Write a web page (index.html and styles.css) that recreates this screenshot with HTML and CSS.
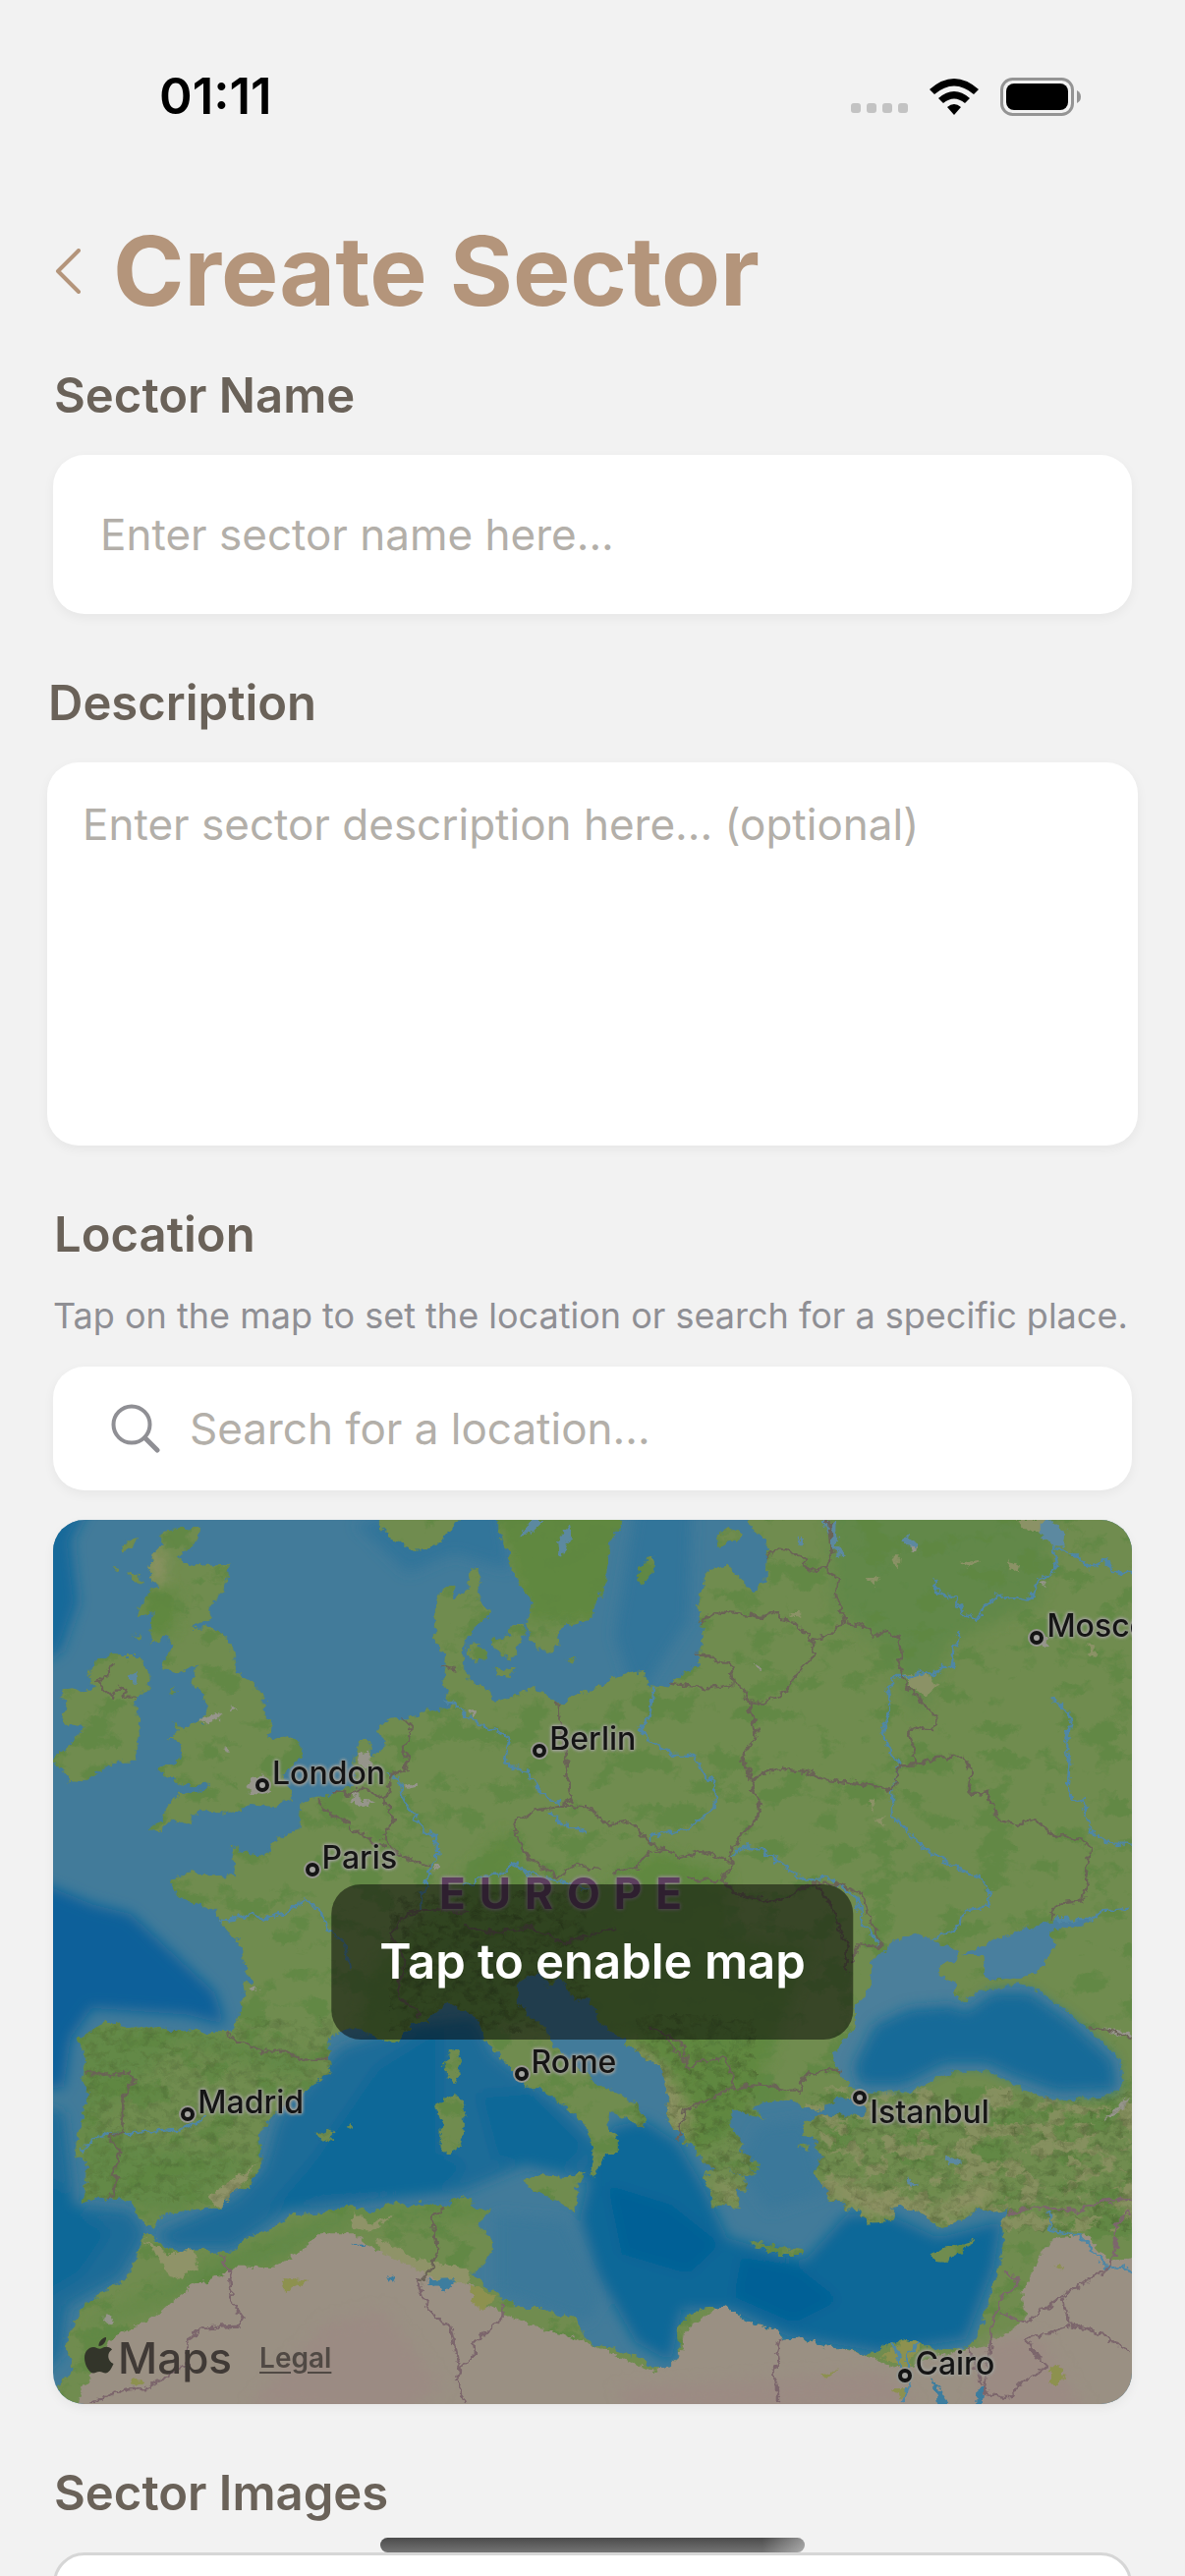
FILE: index.html
```html
<!DOCTYPE html>
<html lang="en">
<head>
<meta charset="utf-8">
<meta name="viewport" content="width=device-width, initial-scale=1">
<title>Create Sector</title>
<link rel="stylesheet" href="styles.css">
</head>
<body>
<div class="screen">
  <div class="status">
    <span class="time">01:11</span>
    <div class="status-icons">
      <svg class="dots" viewBox="0 0 58 10" aria-hidden="true"><g fill="#c3c3c3"><rect width="10" height="10" rx="3"/><rect x="16" width="10" height="10" rx="3"/><rect x="32" width="10" height="10" rx="3"/><rect x="48" width="10" height="10" rx="3"/></g></svg>
      <svg class="wifi" viewBox="0 0 50 37" aria-hidden="true"><path d="M0 11Q25-11 50 11L45 16Q25-1 5 16ZM9 20Q25 6 41 20L36 25Q25 16 14 25ZM18 29Q25 23 32 29L25 37Z"/></svg>
      <svg class="battery" viewBox="0 0 82 39" aria-hidden="true"><rect x="1.5" y="1.5" width="72" height="36" rx="11" fill="none" stroke="#949494" stroke-width="3"/><rect x="6" y="6" width="63" height="27" rx="8"/><path d="M78 13Q82 15 82 19.500Q82 24 78 26Z" fill="#949494"/></svg>
    </div>
  </div>

  <header class="title-row">
    <button class="back" type="button" aria-label="Back"><svg viewBox="0 0 26 46" aria-hidden="true"><path d="M24 2L3 23L24 44" fill="none" stroke="#b4957b" stroke-width="4" stroke-linecap="round" stroke-linejoin="round"/></svg></button>
    <h1>Create Sector</h1>
  </header>

  <main class="form">
    <div class="field">
      <label for="name">Sector Name</label>
      <input class="box name" id="name" type="text" placeholder="Enter sector name here...">
    </div>
    <div class="field wide">
      <label for="description">Description</label>
      <textarea class="box description" id="description" placeholder="Enter sector description here... (optional)"></textarea>
    </div>
    <section class="location">
      <label for="search">Location</label>
      <p class="hint">Tap on the map to set the location or search for a specific place.</p>
      <div class="box search">
        <svg viewBox="0 0 50 50" aria-hidden="true"><g fill="none" stroke="#8f8f94" stroke-width="4" stroke-linecap="round"><circle cx="21" cy="21" r="18.500"/><path d="M34.500 34.500L47 47" stroke-width="5"/></g></svg>
        <input id="search" type="text" placeholder="Search for a location...">
      </div>
      <div class="map">
        <svg class="terrain" viewBox="39 48 3074 2700" preserveAspectRatio="none" aria-hidden="true">
          <defs>
            <filter id="soft" filterUnits="userSpaceOnUse" x="-200" y="-200" width="3600" height="3200"><feGaussianBlur stdDeviation="20"/></filter>
            <filter id="jag" filterUnits="userSpaceOnUse" x="0" y="0" width="3160" height="2800"><feTurbulence type="fractalNoise" baseFrequency=".045" numOctaves="3" seed="4"/><feDisplacementMap in="SourceGraphic" scale="30" xChannelSelector="R" yChannelSelector="G"/></filter>
            <filter id="woods" filterUnits="userSpaceOnUse" x="0" y="0" width="3160" height="2800" color-interpolation-filters="sRGB"><feTurbulence type="fractalNoise" baseFrequency=".009 .012" numOctaves="5" seed="11"/><feColorMatrix values="0 0 0 0 .37  0 0 0 0 .53  0 0 0 0 .26  10 0 0 0 -5.600"/></filter>
            <filter id="dry" filterUnits="userSpaceOnUse" x="0" y="0" width="3160" height="2800" color-interpolation-filters="sRGB"><feTurbulence type="fractalNoise" baseFrequency=".013 .018" numOctaves="4" seed="23"/><feColorMatrix values="0 0 0 0 .55  0 0 0 0 .57  0 0 0 0 .39  12 0 0 0 -6.300"/></filter>
            <filter id="relief" filterUnits="userSpaceOnUse" x="0" y="0" width="3160" height="2800" color-interpolation-filters="sRGB"><feTurbulence type="fractalNoise" baseFrequency=".03 .04" numOctaves="4" seed="7"/><feColorMatrix values="0 0 0 0 .24  0 0 0 0 .3  0 0 0 0 .15  2.500 0 0 0 -1.150"/></filter>
            <clipPath id="land">
              <path d="M350 80L465 70L440 125L400 155L410 180L440 190L535 185L538 215L520 270L480 320L490 350L430 378L490 375L525 400L550 435L565 515L615 550L640 590V640L662 680L655 720L700 708L745 730V775L690 830L722 880L715 900L670 925L600 915L570 935L525 945L470 935L435 950L430 978L380 965L345 1000L312 992L345 965L375 910L400 885L460 875L487 855L440 862L395 850L340 815L350 800L400 780L410 730L368 720L400 690L380 660L410 680L460 665L475 640L465 575L435 555L440 510L455 490L400 515L345 500L365 460L380 430L360 400L320 430V370L330 330L280 345L290 310L310 270L340 250L310 210L320 160L345 130Z"/>
              <path d="M65 565L100 562L130 572L160 560L135 520L165 480L210 455L235 465H285L300 500L318 530L310 565L275 590L280 640L285 700L270 785H220L120 850L85 845L60 800L30 785L95 730L125 680L75 670L60 650L75 620Z"/>
              <path d="M250 110L280 102L270 130L235 150L232 130ZM255 207L285 220L290 245L262 230ZM212 192L230 195L222 207ZM265 402L290 398L280 415ZM370 575L388 560L380 585ZM560 930H578L568 945Z"/>
              <path d="M975 0L970 70L1010 110L1060 140L1115 138L1160 95L1195 48V0Z"/>
              <path d="M1305 0L1310 100L1340 160L1350 210L1400 290V330L1385 365L1410 440L1440 450L1475 440L1480 395L1500 370L1568 358L1585 310L1605 260L1620 180L1625 120L1640 90L1670 0Z"/>
              <path d="M1220 430L1250 425L1275 450L1270 480L1240 485L1220 460ZM1290 410L1340 400L1350 370L1380 368L1380 400L1350 470L1310 460L1290 430ZM1295 500L1355 505L1345 528L1300 522ZM1505 470L1530 472L1520 486Z"/>
              <path d="M1704 200L1740 165L1756 160L1745 210L1720 250L1705 235ZM1930 95L1970 75L2005 92L1975 115L1935 125Z"/>
              <!-- north-west mainland -->
              <path d="M1230 195L1255 200L1260 240L1245 280L1260 310L1285 325L1275 350L1250 355L1220 410L1205 450L1210 490L1225 545L1280 565L1290 600L1340 590L1410 555L1450 590L1490 610L1530 580L1572 573V1380H600L575 1350L525 1290L500 1240L400 1205L370 1150L440 1120L485 1135H560L545 1050L565 1040L575 1065L640 1075L660 1035L740 990L745 915L780 900L900 860L890 790L915 720H940L945 775L990 740L965 690L990 660L1050 655L1110 625L1140 640L1170 610L1150 550L1160 470L1125 420V320L1140 265L1185 250L1180 290L1215 270Z"/>
              <!-- north-east mainland -->
              <path transform="translate(1568)" d="M0 573L52 540L112 515L157 510L167 555L220 560L262 520L312 490L322 390L307 300L337 200L392 185L432 230L467 268L502 235L507 110L462 80L440 0H1600V1380H0Z"/>
              <!-- Iberia, France, Italy -->
              <path transform="translate(0 1350)" d="M580 0H1572V160H1520L1480 90L1455 130L1420 75L1365 110V170L1400 220L1440 240L1455 290L1510 350L1572 402V575L1550 540L1520 510L1480 475L1430 440L1390 430L1340 370L1270 290L1245 215L1165 170L1130 200L1100 230L1060 240L1020 290L960 280L900 250L850 265L820 290L830 385L770 430L670 510L635 560L625 600L640 650L600 740L555 745L520 800H470L390 810L335 835L325 865L280 830L270 790L235 765L205 775L170 770L125 780L135 665L100 635L115 560L140 450L120 390L130 340L110 285L190 230L250 245H320L400 262L440 255L480 265H550L575 190L585 110L610 115L580 50Z"/>
              <path transform="translate(0 1350)" d="M30 1450L60 1330L100 1290L75 1230V1190L100 1150L130 1090L200 1045L250 1010L275 950L300 880H320L350 920L400 930L465 920L485 935H548L600 885L650 870L715 820L800 815L890 793L945 815L1020 780L1050 795L1090 783L1115 795H1150L1210 762L1240 775L1235 795L1260 810L1290 790L1255 850L1290 900V930L1265 975L1230 1000L1310 1070L1370 1105L1430 1103L1500 1130L1538 1140L1545 1180L1572 1212V1450Z"/>
              <path transform="translate(0 1350)" d="M1195 310L1200 370L1185 415L1160 400L1155 360L1165 320ZM1125 485L1190 450L1215 490L1210 560L1200 615L1160 635L1140 610L1145 540ZM1380 710L1440 700L1500 705L1555 685L1530 740L1535 790L1520 808L1460 770L1390 735ZM790 575L820 557L845 570L825 598L805 592ZM870 545L890 540L893 556Z"/>
              <!-- Balkans -->
              <path transform="translate(1568 1350)" d="M0 0H820L760 200V460L700 465L650 500L610 495L570 470L500 475L465 490L500 530L440 510L400 500V545L440 610L420 620L480 660L475 690L430 650L475 695L450 705L370 680L440 705L450 750L415 745L425 805L385 795L350 800L345 750L325 700L355 680L310 640L300 610L265 600V575L215 530L225 470L215 400L205 375L150 330L100 290L30 235L0 160Z"/>
              <path transform="translate(1568 1350)" d="M0 402L20 420L80 450L130 480L160 530L155 555L110 530L60 505L45 545L80 590V630L45 640L10 710L0 700L10 640L0 580ZM455 900L500 910L540 918L608 928L605 942L540 942L500 925L460 918ZM970 940L1010 920L1095 893L1060 935L1010 965L980 962ZM590 608L620 600L625 625Z"/>
              <!-- Anatolia, Levant, Egypt -->
              <path transform="translate(1568 1350)" d="M755 0H1600V1450H0V1212L60 1225L130 1250L180 1290H215L255 1250L247 1165L280 1130L330 1105L380 1100L430 1125L435 1145L535 1170L545 1200L600 1195L685 1225L740 1235L785 1250L840 1220L905 1200L945 1215L985 1235L1080 1225L1110 1180L1125 1120L1160 1000L1180 920L1175 850L1195 800L1150 815L1105 800L1060 840L995 860L940 815L895 795L862 800L860 840L790 845L765 805L725 800L720 780H680L675 740L640 700L655 650L640 580H610V540L650 515H780L790 485L755 460Z"/>
            </clipPath>
          </defs>

          <rect width="3160" height="2800" fill="#427b9a"/>
          <g filter="url(#soft)">
            <path fill="#13699a" d="M-100 -100H190L90 110L110 300L60 450L-100 540Z"/>
            <path fill="#31749a" d="M1200 0H1310L1340 200L1180 150L1050 210L900 60ZM1700 0H1860L1850 350L1700 600L1640 400Z"/>
            <path fill="#07619a" d="M-100 1110L150 1220L260 1250L380 1370L500 1490L530 1590L420 1560L150 1540L90 1630L70 1780L-100 1800Z"/>
            <path fill="#1a6c98" d="M-100 1800L70 1860L100 2140L260 2160L300 2230L230 2360L80 2450L60 2600L-100 2750ZM330 2230L560 2120L640 2030L680 1880L860 1660L1060 1590L1240 1570L1290 1680L1480 1830L1600 1960L1560 2060L1380 2020L1200 2100L700 2160L550 2270L380 2270Z"/>
            <path fill="#0a6898" d="M-100 2050L60 2080L130 2180L200 2220L120 2350L40 2400L-100 2500ZM780 2000L960 1720L1140 1600L1140 1980L1220 2020L1150 2090L800 2120L650 2160ZM1250 1800L1400 1790L1560 1960L1500 2030L1300 2000ZM1590 1960L1640 1900L1720 1880L1820 1950L1900 2100L1960 2240L2180 2310L2300 2170L2420 2170L2560 2240L2740 2190L2720 2330L2640 2550L2400 2590L2130 2540L1970 2460L1830 2460L1800 2620L1700 2560L1590 2350L1540 2180Z"/>
            <path fill="#006096" d="M1620 2080L1800 2140L1940 2260L1850 2350L1660 2290ZM2000 2300L2160 2330L2280 2430L2150 2500L1980 2420Z"/>
            <path fill="#3b789a" d="M1300 2170L1500 2190L1600 2430L1560 2500L1300 2400ZM2050 1900L2180 1880L2240 2100L2080 2160L1990 2020Z"/>
          </g>

          <g filter="url(#jag)">
            <g clip-path="url(#land)">
              <rect width="3160" height="2800" fill="#6f8c4f"/>
              <g filter="url(#soft)">
                <path fill="#628849" d="M2250 0H2900L2850 300L2600 420L2500 650L2420 450L2270 320Z"/>
                <path fill="#61883f" d="M1290 0H1700V360H1400ZM300 230L400 280L380 400H300ZM1330 1000L1420 1200L1600 1180L1760 1060L1960 1130V1320L2200 1350L2000 1900L1850 2000L1780 1850L1540 1560L900 1650L950 1420Z"/>
                <path fill="#648946" d="M100 1580H400L580 1640L800 1700L740 1760L400 1650L130 1900L300 1960L620 2000L400 2180L130 2130ZM500 2300L850 2150L1280 2120V2180L900 2190L640 2330L450 2400L120 2520Z"/>
              </g>
              <rect width="3160" height="2800" filter="url(#woods)" opacity=".75"/>
              <g filter="url(#soft)">
                <path fill="#8d9364" d="M310 130L360 150V250L310 230ZM1660 1620L1780 1720L1860 1860L1840 1960L1780 1880ZM1900 2050L2010 2100L1980 2150ZM2250 2110L2380 2180L2420 2150L2560 2190L2700 2140L2760 2070L2690 2060L2540 2160L2400 2100L2260 2060Z"/>
              </g>
              <svg x="2180" y="1780" width="980" height="440" viewBox="2180 1780 980 440"><rect width="3160" height="2800" filter="url(#dry)" opacity=".8"/></svg>
              <path fill="#8f9368" d="M480 2110L530 2080L600 2030L620 2010L560 2100L520 2150ZM300 2240L360 2290L440 2270L450 2340L380 2370ZM900 2160L940 2200L1010 2170L950 2220L890 2210ZM960 2240L1060 2300L1230 2340L1210 2400L1080 2370L980 2320Z"/>
              <path fill="#9a9083" d="M80 2800L200 2550L330 2480L430 2390L530 2350L560 2330H670L750 2280L800 2230H900L960 2280L1070 2330L1130 2370L1240 2380L1260 2440L1380 2500L1560 2560L1750 2650L1830 2590L1840 2520L1950 2440L2120 2530L2350 2600L2440 2640L2640 2580L2690 2570L2760 2530L2810 2490L2800 2410L2850 2300L2890 2240L2980 2230L3050 2310L3160 2290V2800Z"/>
              <g filter="url(#soft)"><path fill="#9b8b83" d="M600 2750L820 2500L980 2460L1150 2700L1000 2800ZM1650 2700L2400 2650L2500 2750L1700 2800ZM2700 2560L2850 2540L3000 2800H2650Z"/></g>
              <path fill="#8d9150" d="M2400 2600L2470 2550L2515 2565L2490 2600L2470 2645ZM695 2360L765 2370L700 2410ZM1230 2380L1300 2420L1260 2460L1235 2440ZM262 2670L305 2680L270 2695ZM2880 2630L2920 2640L2915 2680L2880 2690ZM2430 2700L2475 2700L2455 2735ZM2230 2660L2285 2640L2240 2670ZM2890 2330L2915 2325L2910 2335Z"/>
              <g fill="#96958b"><path d="M540 610L565 625L545 635ZM460 655L515 635V660L470 668ZM520 750L535 738L542 760ZM590 855L635 825L660 880L600 885ZM905 760L940 755L945 810L905 790ZM885 910L905 870L915 905L960 908L910 930ZM1035 860L1080 848V862L1050 870ZM1220 635L1240 632L1235 655ZM1130 1100L1145 1105L1130 1115ZM2030 492L2060 495V508ZM2480 110L2500 135L2485 145ZM2850 240L2870 235L2860 255ZM2820 390L2875 405L2870 430L2835 425ZM600 1475H625L615 1490ZM180 2485L200 2475L210 2490L195 2500ZM3030 1600L3110 1610V1630L3060 1620ZM3030 1880L3100 1810L3090 1850Z"/></g>
              <g fill="#8b9266"><path d="M2620 180L2680 170L2650 195ZM2360 230L2390 220L2380 250ZM2430 160L2450 150L2445 200ZM2760 160L2790 200L2770 205ZM2470 520L2520 510L2560 555L2530 585L2480 560ZM2990 430L3010 435L3005 465L2990 460ZM2360 900L2385 895L2370 940ZM2380 960L2410 955L2400 980ZM2785 48H2870L2860 80L2800 75ZM2140 330H2170V345L2140 340Z"/></g>
              <!-- mountain shading -->
              <g opacity=".6">
                <svg x="1000" y="1180" width="560" height="430" viewBox="1000 1180 560 430"><rect width="3160" height="2800" filter="url(#relief)"/></svg>
                <svg x="130" y="1570" width="700" height="560" viewBox="130 1570 700 560"><rect width="3160" height="2800" filter="url(#relief)" opacity=".5"/></svg>
                <svg x="1700" y="1560" width="340" height="620" viewBox="1700 1560 340 620"><rect width="3160" height="2800" filter="url(#relief)" opacity=".8"/></svg>
                <svg x="2200" y="1800" width="960" height="420" viewBox="2200 1800 960 420"><rect width="3160" height="2800" filter="url(#relief)" opacity=".7"/></svg>
              </g>
            </g>

            <!-- inland waters -->
            <g transform="translate(1568 1350)">
              <path fill="#4c7f9b" d="M850 0L880 -25L940 -35L985 -10L1050 15L1040 45L1000 60L990 80L1040 110L1045 165L1065 170L1100 140L1180 120L1230 115L1300 150L1360 200L1420 250L1470 300L1515 350L1520 400L1500 440L1440 465L1330 470L1240 440L1190 410L1130 380H1040L980 400L920 445H850L790 450L740 430L715 390L690 345L710 300L755 240V180L800 120V50Z"/>
              <path fill="#4a7f9e" d="M1310 -75L1400 -85L1440 -80L1400 -60L1310 -45L1325 0L1285 70L1220 105L1130 95L1120 30L1060 20L1110 5L1150 -20L1220 -45Z"/>
              <path fill="#3f7b9b" d="M650 505L720 465L770 460L785 505L700 515Z"/>
            </g>
            <path fill="#5b89a0" d="M2235 48H2272L2270 130L2298 155L2270 160L2250 100ZM2840 80L2870 48L2925 80L2915 128L2890 125ZM2455 110L2480 90L2500 130L2465 125ZM260 520H280V545H260ZM1480 165L1475 110L1510 60L1520 100ZM1370 100L1400 48H1440L1400 90ZM2160 105H2175V130H2165ZM2580 1985L2620 2000L2615 2018L2585 2010ZM2475 2060L2500 2080L2480 2085Z"/>
            <path fill="#3c7d9e" d="M890 2255L940 2262H900ZM990 2355L1015 2370L1000 2375ZM1100 2370L1190 2368L1150 2405ZM2540 2660L2590 2748H2560ZM2672 2700L2695 2695L2685 2748H2668Z"/>
          </g>
          <g filter="url(#soft)"><path fill="#136b98" d="M2320 1720L2380 1590L2480 1540L2600 1530L2640 1550L2720 1490L2820 1490L2940 1580L3060 1700L3070 1790L2900 1795L2780 1750L2700 1710L2580 1710L2460 1775L2340 1775Z"/></g>

          <g filter="url(#jag)" fill="none">
            <g stroke="#5087a5" stroke-width="7">
              <path d="M1150 605H1180L1220 650L1290 690L1340 715L1325 790L1390 820L1430 880L1480 915M990 820L1025 840L1040 910L1100 1000L1130 1010L1135 1070L1110 1130L1085 1210V1240M515 1268L545 1270L610 1252L640 1268L710 1245L755 1205L800 1240L820 1300L870 1340L885 1420M1210 1170L1280 1130H1310L1355 1100L1400 1130L1480 1150L1580 1180M1460 940L1490 980L1560 1000M115 1980L150 1940L195 1925L330 1915L400 1910L450 1890L475 1870"/>
              <path d="M1750 560L1745 620L1740 650L1705 685L1760 735L1810 765H1860L1900 830L1925 860V930L1850 990L1745 1010L1743 1040M1980 1080L1990 1055L2020 1045L2060 1060L2130 1110L2150 1130L2200 1150L2245 1138L2330 1200L2350 1290L2400 1350M2547 232L2560 270L2610 285L2630 330L2670 355L2690 315L2730 280L2820 295L2845 230L2880 220L2900 170L2885 130L2950 150L2990 195L3040 170L3060 210H3120M2625 390L2605 440L2600 495H2570L2545 525L2520 510L2480 525L2440 525L2418 560L2425 620L2400 700L2440 780L2450 805L2430 880L2430 950L2480 1005L2520 1050L2600 1100L2690 1150L2705 1180V1230L2640 1240L2610 1300L2540 1330M2885 590L2940 655L2925 740L2935 790L2930 870L2945 905H2975L2990 995L3060 1040H3120M2895 1270L3000 1265L3030 1240L3110 1232M2870 2155L2885 2190L2875 2220L2960 2230L3020 2300L3045 2335L3090 2330L3120 2350M2430 2560L2450 2600L2455 2640M2505 2560L2475 2600L2470 2650L2475 2690L2460 2745"/>
            </g>
            <g stroke="#6b6357" stroke-width="7" stroke-linejoin="round">
              <path d="M210 480L195 520L165 545L205 585L230 555L250 590H275M1145 495L1190 510M1030 645L1060 680L1055 720L1035 745L1050 775L1040 815L1000 825L1000 860L985 910L1010 960L980 1020L1010 1055L1030 1080L1115 1105M835 875L890 885L925 865L985 905M790 900L830 945L880 975L890 1005L920 1000L945 1030L985 1045M1475 600L1485 680L1500 770L1505 830L1520 905L1480 920L1415 935L1350 975L1370 1040L1400 1085L1480 1140L1530 1100L1600 1120M1480 920L1568 925L1620 980L1680 970L1745 1040L1790 1055L1820 1080L1900 1060L1975 1095L1945 1150L1990 1195L2110 1215L2210 1155L2260 1230L2300 1350V1430M1790 1055L1740 1060L1700 1110L1630 1130M1940 1150L1840 1145M1225 1245L1100 1235L1050 1250L1000 1310L1040 1400L1020 1500L1090 1560M1210 1290L1300 1310L1400 1290L1490 1340L1560 1320L1640 1290"/>
              <path d="M2248 48L2260 150L2245 195L2275 230L2270 280L2295 350L2260 395L2198 412L2150 360L2110 350L2100 325L2060 345L1980 332L1935 328L1885 360M2070 160L2120 135L2165 160L2195 200L2250 195M1870 458L1900 460L1935 485H1970L1978 545L2010 570L2020 605L2070 605L2130 570L2155 520L2210 460L2198 412M1795 548L1900 562L1978 552M2020 605L2045 700L2000 780L2020 810L2030 870L2055 920L2040 970L2000 1010L1970 1060L1975 1095M2295 360L2360 378L2370 405L2420 390L2450 410L2455 470L2450 500L2475 560L2510 590L2515 615L2560 650L2545 690L2500 680L2475 695L2490 740L2505 795L2450 800L2435 870L2370 860L2330 855L2240 840L2190 820L2120 810L2070 820L2030 845M2505 795L2545 775L2630 768L2655 820L2650 880L2700 885L2730 965L2790 980L2840 965L2880 1005L2950 1020L2995 1045L2985 1100V1160L2970 1210L2920 1215L2885 1240L2880 1270M2210 1155L2280 1160L2345 1190L2360 1250L2400 1350L2335 1345L2315 1400"/>
              <path d="M535 1620L580 1645L640 1670L700 1670L760 1700L825 1690M125 1735L160 1735L190 1745L250 1735L270 1760L240 1810L235 1920L200 1930L230 1980L210 2050L225 2050L200 2125M1785 1630L1850 1720L1890 1700L1960 1690L1980 1780L1900 1820L1840 1850L1820 1940M1985 1785L2060 1770L2130 1790L2170 1790L2180 1745L2260 1725L2285 1735M1740 1600L1830 1640L1850 1720M2990 1600L3060 1610L3110 1630M1150 2150L1120 2180L1135 2280L1120 2330L1080 2380"/>
            </g>
            <g stroke="#7c666c" stroke-width="7">
              <path d="M1080 2370L1095 2430L1130 2485L1170 2510L1197 2640L1190 2670L1215 2745M1197 2650L1240 2600L1235 2560L1320 2485V2435M515 2290L540 2340L545 2430L578 2485L570 2510L470 2515L420 2550L425 2620L370 2660L310 2700L240 2705L150 2745M2112 2550L2100 2590L2105 2620L2090 2650L2105 2700V2745M2760 2170L2790 2155L2870 2145L2960 2160L3020 2130L3110 2120M3110 2160L3065 2200V2280L3045 2335L2910 2420L2810 2500L2740 2470M2918 2420L2935 2500L2945 2510L3010 2525L3110 2590M2935 2510L2810 2555L2870 2635L2790 2690L2760 2728L2695 2715L2650 2575M2750 2340L2790 2370L2740 2430L2715 2500L2695 2710"/>
            </g>
          </g>
        </svg>

        <span class="continent">EUROPE</span>
        <span class="pin london"><span>London</span></span>
        <span class="pin paris"><span>Paris</span></span>
        <span class="pin berlin"><span>Berlin</span></span>
        <span class="pin moscow"><span>Moscow</span></span>
        <span class="pin madrid"><span>Madrid</span></span>
        <span class="pin rome"><span>Rome</span></span>
        <span class="pin low istanbul"><span>Istanbul</span></span>
        <span class="pin cairo"><span>Cairo</span></span>

        <button class="enable" type="button">Tap to enable map</button>
        <div class="credit">
          <span class="brand"><svg viewBox="0 0 30 37" aria-hidden="true"><path d="M22 0C22.500 4 19 9 14.500 9C14 5 18 .5 22 0ZM28 12.500C22.500 16 23 24 29.500 27C27.500 32 24.500 36.500 21.500 36.500C19 36.500 18 35 15.200 35C12.300 35 11.300 36.500 9 36.500C5 36.500 0 28.500 0 21C0 14 4.500 10 9 10C11.800 10 13.500 11.800 15.500 11.800C17.500 11.800 19 9.800 22.500 9.800C24.500 9.800 26.800 10.800 28 12.500Z"/></svg>Maps</span>
          <a href="#legal">Legal</a>
        </div>
      </div>
    </section>
    <section class="images">
      <h2>Sector Images</h2>
      <div class="picker"></div>
    </section>
  </main>
  <div class="home-bar"></div>
</div>
</body>
</html>
```

FILE: styles.css
```css
* { box-sizing: border-box; }

body {
  margin: 0;
  background: #f2f2f2;
  color: #6a6259;
  font-family: Inter, "Liberation Sans", sans-serif;
}

.screen {
  position: relative;
  height: 100vh;
  overflow: hidden;
}

.status {
  display: flex;
  justify-content: space-between;
  align-items: center;
  padding: 68px 106px 88px 162px;
  color: #000;
}
.time { font-size: 51px; line-height: 60px; font-weight: 600; }
.status-icons { display: flex; align-items: center; gap: 22px; }
.status-icons svg { display: block; }
.dots { width: 58px; height: 10px; margin-top: 24px; }
.wifi { width: 50px; height: 37px; }
.battery { width: 82px; height: 39px; }

.title-row {
  display: flex;
  align-items: center;
  gap: 32px;
  padding: 0 55px;
}
.back {
  width: 28px;
  padding: 0;
  border: 0;
  background: none;
}
.back svg { display: block; width: 28px; height: 46px; }
h1 {
  margin: 0;
  color: #b4957b;
  font-size: 98px;
  line-height: 120px;
  font-weight: 700;
}

.form {
  display: flex;
  flex-direction: column;
  gap: 61px;
  padding: 37px 54px 0;
}
.field, .images { display: flex; flex-direction: column; gap: 30px; }
.wide { margin: 0 -6px; }
label, h2 {
  display: block;
  margin: 0;
  padding-left: 1px;
  font-size: 49px;
  line-height: 60px;
  font-weight: 600;
}

.box {
  width: 100%;
  border: 0;
  border-radius: 32px;
  background: #fff;
  box-shadow: 0 4px 12px rgba(0, 0, 0, .05);
}
input, textarea {
  display: block;
  outline: 0;
  color: #6a6259;
  font: 44px/54px Inter, "Liberation Sans", sans-serif;
}
::placeholder { color: #b3afa9; opacity: 1; }
.name { height: 162px; padding: 0 48px; }
.description { height: 390px; padding: 36px; resize: none; }

.hint {
  margin: 28px 0;
  color: #8f8f94;
  font-size: 36px;
  line-height: 48px;
  white-space: nowrap;
}
.search {
  display: flex;
  align-items: center;
  gap: 30px;
  height: 126px;
  padding: 0 59px;
}
.search svg { flex: none; width: 50px; height: 50px; }
.search input { flex: 1; min-width: 0; padding: 0; border: 0; background: none; }

.map {
  position: relative;
  height: 900px;
  margin-top: 30px;
  border-radius: 32px;
  overflow: hidden;
  color: #151515;
  box-shadow: 0 4px 12px rgba(0, 0, 0, .05);
}
.terrain { display: block; width: 100%; height: 100%; }

/* map labels: each one is anchored at its city's place on the map */
.pin {
  position: absolute;
  width: 14px;
  height: 14px;
  margin: -7px;
  border: 4px solid #151515;
  border-radius: 50%;
  background: #a5a5a1;
  box-shadow: 0 0 0 2px #96968f;
}
.pin span {
  position: absolute;
  left: 13px;
  bottom: -1px;
  font-size: 32px;
  line-height: 32px;
  font-weight: 500;
  text-shadow: 0 0 3px #a0a09a, 0 0 3px #a0a09a, 0 0 4px #a0a09a, 0 0 4px #a0a09a;
}
.pin.low span { bottom: -28px; }
.london { left: 19.4%; top: 30%; }
.paris { left: 24%; top: 39.5%; }
.berlin { left: 45.1%; top: 26.1%; }
.moscow { left: 91.2%; top: 13.3%; }
.madrid { left: 12.5%; top: 67.2%; }
.rome { left: 43.4%; top: 62.7%; }
.istanbul { left: 74.8%; top: 65.3%; }
.cairo { left: 79%; top: 96.8%; }
.continent {
  position: absolute;
  left: 35.8%;
  top: 356px;
  color: #5c3f5e;
  font-size: 44px;
  line-height: 48px;
  font-weight: 700;
  letter-spacing: 14px;
  text-shadow: 0 0 3px #8f8d88, 0 0 4px #8f8d88, 0 0 4px #8f8d88;
}

.enable {
  position: absolute;
  left: 50%;
  top: 50%;
  transform: translate(-50%, -50%);
  padding: 49px;
  border: 0;
  border-radius: 30px;
  background: rgba(0, 0, 0, .5);
  color: #fff;
  font: 600 49px/60px Inter, "Liberation Sans", sans-serif;
  white-space: nowrap;
}
.credit {
  position: absolute;
  left: 32px;
  bottom: 20px;
  display: flex;
  align-items: center;
  gap: 28px;
  color: #403a36;
}
.brand { display: flex; align-items: center; gap: 4px; font-size: 44px; line-height: 54px; font-weight: 500; }
.brand svg { width: 30px; height: 37px; margin-bottom: 6px; fill: #33352a; }
.credit a { color: #504944; font-size: 28px; line-height: 32px; font-weight: 600; text-underline-offset: 4px; }

.picker {
  height: 300px;
  border: 3px solid #d6d6d6;
  border-radius: 32px;
  background: #fff;
}

.home-bar {
  position: absolute;
  left: 50%;
  bottom: 24px;
  width: 432px;
  height: 15px;
  margin-left: -216px;
  border-radius: 8px;
  background: linear-gradient(90deg, transparent 90%, rgba(255, 255, 255, .4)), linear-gradient(#4b4b4b, #747474);
}
```
